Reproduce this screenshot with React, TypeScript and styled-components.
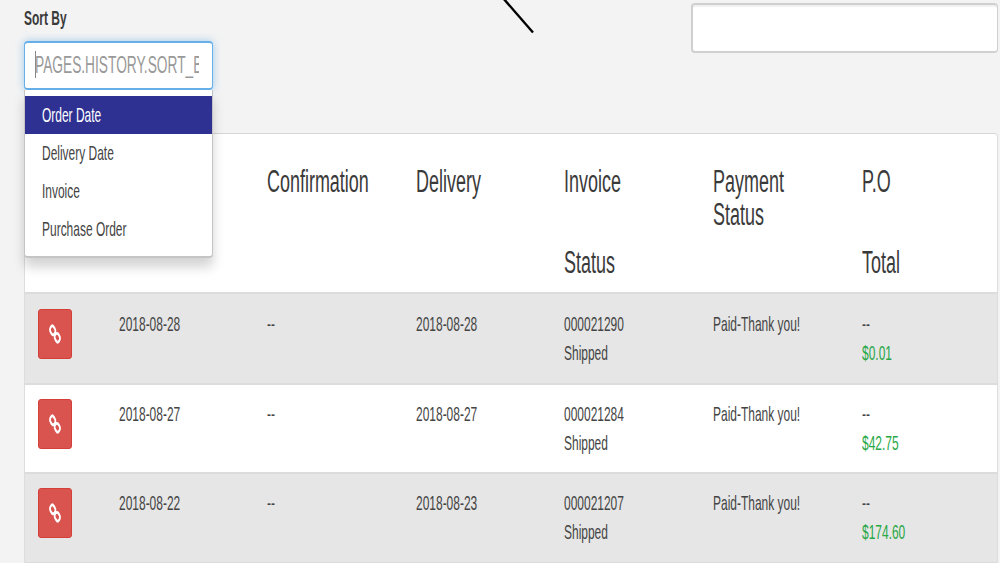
import React, { useState } from "react";
import styled, { createGlobalStyle } from "styled-components";

const GlobalStyle = createGlobalStyle`
  * {
    box-sizing: border-box;
  }
  body {
    margin: 0;
    background: #f3f3f3;
    color: #3a3a3a;
    font-family: "Liberation Sans", Arial, sans-serif;
    overflow: hidden;
  }
`;

const Page = styled.div`
  height: 563px;
  overflow: hidden;
  padding: 0 2px 0 24px;
`;

const Toolbar = styled.div`
  display: flex;
  height: 133px;
`;

// condensed lettering used all over the page
const Text = styled.span<{ $size?: number; $ratio?: number }>`
  display: block;
  width: max-content;
  font-size: ${({ $size }) => $size ?? 20.4}px;
  white-space: nowrap;
  transform: scaleX(${({ $ratio }) => $ratio ?? 0.587});
  transform-origin: 0 50%;
`;

const SortField = styled.div`
  position: relative;
  width: 189px;
  padding-top: 4px;
`;

const SortLabel = styled.label`
  display: block;
  height: 37px;
  line-height: 29px;
  font-weight: bold;
`;

const SortBox = styled.div`
  display: flex;
  align-items: center;
  height: 49px;
  padding: 0 13px 2px 10px;
  background: #fff;
  border: 2px solid #66afe9;
  border-width: 2px 1.5px;
  border-radius: 4px;
  box-shadow: 0 0 8px rgba(102, 175, 233, 0.6);
  color: #999;
`;

const Clip = styled.div`
  flex: 1;
  overflow: hidden;
  line-height: 30px;
`;

const Caret = styled.div`
  width: 1px;
  height: 27px;
  margin-right: -1px;
  background: #888;
`;

const Menu = styled.ul`
  position: absolute;
  z-index: 1;
  top: 90px;
  left: 0;
  width: 188.5px;
  height: 168px;
  margin: 0;
  padding: 6px 0 0;
  list-style: none;
  background: #fff;
  border: solid #c4c4c4;
  border-width: 0 1px 2px;
  border-radius: 0 0 4px 4px;
  box-shadow: 0 9px 12px rgba(0, 0, 0, 0.175);
`;

const MenuItem = styled.li<{ $active: boolean }>`
  height: 38px;
  padding-left: 17px;
  line-height: 38px;
  cursor: pointer;
  background: ${({ $active }) => ($active ? "#2e3192" : "transparent")};
  color: ${({ $active }) => ($active ? "#fff" : "#444")};
`;

const Slash = styled.svg`
  display: block;
  width: 40px;
  height: 40px;
  margin: 0 auto 0 281px;
`;

const SearchInput = styled.input`
  width: 307px;
  height: 50px;
  margin-top: 3px;
  background: #fff;
  border: 2px solid #d0d0d0;
  border-right-width: 1px;
  border-radius: 4px;
  box-shadow: inset 0 2px 1px rgba(0, 0, 0, 0.06);
  outline: none;
`;

const Panel = styled.div`
  background: #fff;
  border: 1px solid #ddd;
  border-top: 1px solid #d6d6d6;
  border-radius: 4px;
`;

const columns = `
  display: grid;
  grid-template-columns: 81px repeat(5, 148.6px) 1fr;
  padding-left: 12.6px;
`;

const HeadRow = styled.div`
  ${columns}
  height: 160px;
  padding-top: 31px;
  border-bottom: 2px solid #dcdcdc;
`;

const HeadLine = styled.div<{ $gap?: boolean }>`
  line-height: 33.3px;
  margin-top: ${({ $gap }) => ($gap ? 48 : 0)}px;
`;

const Row = styled.div<{ $shaded: boolean; $height: number }>`
  ${columns}
  height: ${({ $height }) => $height}px;
  padding-top: 14px;
  background: ${({ $shaded }) => ($shaded ? "#e6e6e6" : "#fff")};
  border-bottom: 2px solid #dcdcdc;

  ${HeadRow} + & {
    padding-top: 15px;
  }
`;

const Cell = styled.div`
  padding-top: 1px;
`;

const Line = styled.div<{ $total?: boolean }>`
  line-height: 29.4px;
  color: ${({ $total }) => ($total ? "#28a745" : "#444")};
`;

const LinkButton = styled.button`
  display: flex;
  align-items: center;
  justify-content: center;
  width: 34px;
  height: 50px;
  padding: 0;
  background: #d9534f;
  border: 1px solid #d43f3a;
  border-radius: 3px;
  cursor: pointer;
`;

const options = ["Order Date", "Delivery Date", "Invoice", "Purchase Order"];

const heads = [
  [],
  [],
  ["Confirmation"],
  ["Delivery"],
  ["Invoice", "Status"],
  ["Payment", "Status"],
  ["P.O", "Total"],
];

const orders = [
  { date: "2018-08-28", delivery: "2018-08-28", invoice: "000021290", total: "$0.01", height: 91 },
  { date: "2018-08-27", delivery: "2018-08-27", invoice: "000021284", total: "$42.75", height: 89 },
  { date: "2018-08-22", delivery: "2018-08-23", invoice: "000021207", total: "$174.60", height: 90 },
];

function ChainIcon() {
  return (
    <svg width="12" height="20" viewBox="0 0 12 12" preserveAspectRatio="none">
      <g fill="none" stroke="#fff" strokeWidth="1.7">
        <rect x="1" y="1.6" width="5.4" height="4.4" rx="2.1" transform="rotate(45 3.7 3.8)" />
        <rect x="5.6" y="6" width="5.4" height="4.4" rx="2.1" transform="rotate(45 8.3 8.2)" />
      </g>
    </svg>
  );
}

function SortSelect() {
  const [selected, setSelected] = useState(options[0]);

  return (
    <SortField>
      <SortLabel>
        <Text>Sort By</Text>
      </SortLabel>
      <SortBox>
        <Caret />
        <Clip>
          <Text $size={23.8} $ratio={0.577}>
            PAGES.HISTORY.SORT_BY
          </Text>
        </Clip>
      </SortBox>
      <Menu>
        {options.map((option) => (
          <MenuItem
            key={option}
            $active={option === selected}
            onClick={() => setSelected(option)}
          >
            <Text>{option}</Text>
          </MenuItem>
        ))}
      </Menu>
    </SortField>
  );
}

function App() {
  return (
    <>
      <GlobalStyle />
      <Page>
        <Toolbar>
          <SortSelect />
          <Slash viewBox="0 0 40 40">
            <path d="M9 -2L39 32.5" stroke="#000" strokeWidth="2.4" fill="none" />
          </Slash>
          <SearchInput />
        </Toolbar>
        <Panel>
          <HeadRow>
            {heads.map((lines, index) => (
              <div key={index}>
                {lines.map((line, i) => (
                  <HeadLine key={line} $gap={i > 0 && lines[0] !== "Payment"}>
                    <Text $size={30.6}>{line}</Text>
                  </HeadLine>
                ))}
              </div>
            ))}
          </HeadRow>
          {orders.map((order, index) => (
            <Row key={order.invoice} $shaded={index % 2 === 0} $height={order.height}>
              <LinkButton>
                <ChainIcon />
              </LinkButton>
              <Cell>
                <Line>
                  <Text>{order.date}</Text>
                </Line>
              </Cell>
              <Cell>
                <Line>
                  <Text>--</Text>
                </Line>
              </Cell>
              <Cell>
                <Line>
                  <Text>{order.delivery}</Text>
                </Line>
              </Cell>
              <Cell>
                <Line>
                  <Text>{order.invoice}</Text>
                </Line>
                <Line>
                  <Text>Shipped</Text>
                </Line>
              </Cell>
              <Cell>
                <Line>
                  <Text>Paid-Thank you!</Text>
                </Line>
              </Cell>
              <Cell>
                <Line>
                  <Text>--</Text>
                </Line>
                <Line $total>
                  <Text>{order.total}</Text>
                </Line>
              </Cell>
            </Row>
          ))}
        </Panel>
      </Page>
    </>
  );
}

export default App;
